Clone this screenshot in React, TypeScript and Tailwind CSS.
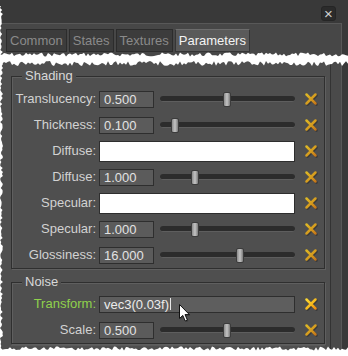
import React from 'react';

type Row =
  | { kind: 'slider'; label: string; value: string; pos: number }
  | { kind: 'color'; label: string }
  | { kind: 'text'; label: string; value: string };

const shading: Row[] = [
  { kind: 'slider', label: 'Translucency:', value: '0.500', pos: 63 },
  { kind: 'slider', label: 'Thickness:', value: '0.100', pos: 11 },
  { kind: 'color', label: 'Diffuse:' },
  { kind: 'slider', label: 'Diffuse:', value: '1.000', pos: 31 },
  { kind: 'color', label: 'Specular:' },
  { kind: 'slider', label: 'Specular:', value: '1.000', pos: 31 },
  { kind: 'slider', label: 'Glossiness:', value: '16.000', pos: 76 },
];

const noise: Row[] = [
  { kind: 'text', label: 'Transform:', value: 'vec3(0.03f)' },
  { kind: 'slider', label: 'Scale:', value: '0.500', pos: 63 },
];

const tabs = ['Common', 'States', 'Textures', 'Parameters'];

// deterministic noise for the torn paper edges
function jitter(seed: number, count: number) {
  let s = seed;
  const out: number[] = [];
  for (let i = 0; i < count; i++) {
    s = (s * 9301 + 49297) % 233280;
    out.push(s / 233280);
  }
  return out;
}

function TornEdges() {
  const top = jitter(7, 176);
  const bot = jitter(31, 176);
  const left = jitter(53, 180);
  const base = jitter(97, 176);

  const band: string[] = [];
  top.forEach((r, i) => band.push(`${i * 2},${52.5 + r * 4}`));
  for (let i = bot.length - 1; i >= 0; i--) band.push(`${i * 2},${61 + bot[i] * 5}`);

  const side: string[] = ['0,6'];
  left.forEach((r, i) => side.push(`${r * 3},${6 + i * 2}`));
  side.push('0,356');

  const bottom: string[] = ['0,356'];
  base.forEach((r, i) => bottom.push(`${i * 2},${346.5 + r * 4}`));
  bottom.push('348,356');

  return (
    <svg className="absolute inset-0 pointer-events-none" width="348" height="356">
      <polygon points={band.join(' ')} fill="#ffffff" />
      <polygon points={side.join(' ')} fill="#ffffff" />
      <polygon points={bottom.join(' ')} fill="#ffffff" />
    </svg>
  );
}

function ResetIcon({ bright }: { bright?: boolean }) {
  const id = bright ? 'xg-bright' : 'xg-dim';
  return (
    <svg width="12" height="12" viewBox="0 0 12 12" className="overflow-visible">
      <defs>
        <linearGradient id={id} x1="0" y1="0" x2="12" y2="12" gradientUnits="userSpaceOnUse">
          <stop offset="0" stopColor={bright ? '#ffe23a' : '#e0c028'} />
          <stop offset="0.55" stopColor={bright ? '#f6b81c' : '#d49a1e'} />
          <stop offset="1" stopColor={bright ? '#e8780e' : '#c06a18'} />
        </linearGradient>
      </defs>
      <path d="M1.5 1.5 L10.5 10.5 M10.5 1.5 L1.5 10.5" stroke="#2a2a2a" strokeOpacity="0.6" strokeWidth="2.6" strokeLinecap="round" transform="translate(1 1)" />
      <path d="M1.5 1.5 L10.5 10.5 M10.5 1.5 L1.5 10.5" stroke={`url(#${id})`} strokeWidth="2.5" strokeLinecap="round" />
    </svg>
  );
}

function Slider({ pos }: { pos: number }) {
  return (
    <div className="relative ml-[6px] w-[135px] h-[15px] flex items-center">
      <div className="w-full h-[6px] rounded-full bg-[#2c2c2c] border-b border-[#5e5e5e]" />
      <div
        className="absolute top-0 w-[8px] h-[15px] rounded-[2px] border border-[#3c3c3c] bg-gradient-to-r from-[#8c8c8c] via-[#c4c4c4] to-[#7c7c7c]"
        style={{ left: pos }}
      />
    </div>
  );
}

function FieldRow({ row }: { row: Row }) {
  return (
    <div className="h-[26px] flex items-center">
      <div className={`w-[84px] text-right ${row.kind === 'text' ? 'text-[#8fd14c]' : 'text-[#d2d2d2]'}`}>
        {row.label}
      </div>
      {row.kind === 'slider' && (
        <>
          <div className="ml-[3px] w-[55px] h-[17px] bg-[#5b5b5b] border border-[#2e2e2e] pl-[4px] text-[#e2e2e2] leading-[15px]">
            {row.value}
          </div>
          <Slider pos={row.pos} />
        </>
      )}
      {row.kind === 'color' && (
        <div className="ml-[3px] w-[196px] h-[21px] bg-white border border-[#2e2e2e]" />
      )}
      {row.kind === 'text' && (
        <div className="relative ml-[3px] w-[196px] h-[17px] bg-[#5e5e5e] border border-[#2e2e2e] pl-[4px] text-[#ececec] leading-[15px] flex items-center">
          <span>{row.value}</span>
          <span className="ml-[1px] w-[1px] h-[12px] bg-[#e8e8e8]" />
          {/* mouse pointer */}
          <svg className="absolute left-[78px] top-[6px]" width="13" height="20" viewBox="0 0 13 20">
            <path d="M1.5 1.5 L1.5 15.5 L4.8 12.4 L7.2 18 L9.4 17 L7 11.6 L11.4 11.6 Z" fill="#000" fillOpacity="0.25" transform="translate(1 1)" />
            <path d="M1.5 1.5 L1.5 15.5 L4.8 12.4 L7.2 18 L9.4 17 L7 11.6 L11.4 11.6 Z" fill="#ffffff" stroke="#111" strokeWidth="1" strokeLinejoin="round" />
          </svg>
        </div>
      )}
      <div className="ml-[10px] w-[12px] h-[12px] flex">
        <ResetIcon bright={row.kind === 'text'} />
      </div>
    </div>
  );
}

function Group({ title, rows, top }: { title: string; rows: Row[]; top: string }) {
  return (
    <div className={`relative w-[314px] border border-[#2f2f2f] shadow-[1px_1px_0_#5f5f5f,inset_1px_1px_0_#5f5f5f] ${top}`}>
      <span className="absolute left-[10px] -top-[9px] px-[3px] bg-[#4f4f4f] text-[#d8d8d8] leading-[16px]">
        {title}
      </span>
      {rows.map((row, i) => (
        <FieldRow key={i} row={row} />
      ))}
    </div>
  );
}

export default function App() {
  return (
    <div className="relative w-[348px] h-[356px] overflow-hidden bg-[#393939] flex flex-col text-[13px] font-['Liberation_Sans',Arial,sans-serif]">
      {/* Title bar */}
      <div className="h-[23px] flex justify-end items-start">
        <div className="mt-[6px] mr-[12px] w-[15px] h-[15px] rounded-[3px] bg-[#2b2b2b] border border-[#252525] flex items-center justify-center text-[#cfcfcf] text-[15px] leading-none">
          ×
        </div>
      </div>

      {/* Body */}
      <div className="flex-1 flex">
        <div className="w-[342px] flex flex-col border-t border-r border-[#585858]">
          {/* Tabs */}
          <div className="h-[34px] bg-[#474747] pl-[6px] pt-[5px] flex gap-[2px] items-start">
            {tabs.map((tab) => (
              <div
                key={tab}
                className={`h-[23px] px-[3px] border flex items-center ${
                  tab === 'Parameters'
                    ? 'bg-[#5a5a5a] border-[#353535] border-t-[#6c6c6c] text-[#f4f4f4]'
                    : 'bg-[#3c3c3c] border-[#2c2c2c] text-[#8a8a8a]'
                }`}
              >
                {tab}
              </div>
            ))}
          </div>

          {/* Parameters panel */}
          <div className="flex-1 flex bg-[#4f4f4f]">
            <div className="w-[331px] border-r border-[#333333] pl-[11px] pr-[5px] pt-[18px]">
              <Group title="Shading" rows={shading} top="pt-[9px]" />
              <Group title="Noise" rows={noise} top="mt-[13px] pt-[8px]" />
              <div className="mt-[1px] border-b border-[#5a5a5a]" />
            </div>
            <div className="flex-1 bg-[#4a4a4a]" />
          </div>
        </div>
        <div className="flex-1 bg-[#393939]" />
      </div>

      <TornEdges />
    </div>
  );
}
